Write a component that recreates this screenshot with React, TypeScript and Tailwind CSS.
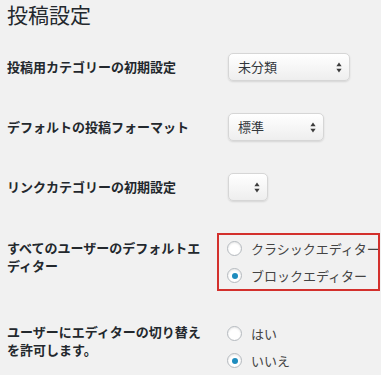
import React from 'react';

interface SelectProps {
  value: string;
  widthClass: string;
}

const SelectArrows: React.FC = () => (
  <svg width="6" height="11" viewBox="0 0 6 11" className="shrink-0">
    <path d="M3 0.6L5.6 4.3H0.4Z" fill="#3c3c3c" />
    <path d="M3 10.4L5.6 6.7H0.4Z" fill="#3c3c3c" />
  </svg>
);

const FakeSelect: React.FC<SelectProps> = ({ value, widthClass }) => (
  <div
    className={`${widthClass} h-7 ml-[11px] flex items-center justify-between pl-[9px] pr-[7px] rounded-[5px] border border-[#d6d6d6] bg-gradient-to-b from-white to-[#eeeeee] shadow-[0_1px_2px_rgba(0,0,0,0.12)] text-[13px] text-[#32373c]`}
  >
    <span>{value}</span>
    <SelectArrows />
  </div>
);

const Radio: React.FC<{ checked?: boolean }> = ({ checked }) => (
  <span className="w-[15px] h-[15px] shrink-0 rounded-full border border-[#b4b9be] bg-white shadow-[inset_0_1px_2px_rgba(0,0,0,0.1)] flex items-center justify-center">
    {checked && <span className="w-[6px] h-[6px] rounded-full bg-[#1e8cbe]" />}
  </span>
);

const RadioRow: React.FC<{ label: string; checked?: boolean }> = ({ label, checked }) => (
  <div className="h-[27px] flex items-center whitespace-nowrap">
    <Radio checked={checked} />
    <span className="ml-[9px] text-[13px] text-[#444]">{label}</span>
  </div>
);

const labelClass = "w-[210px] shrink-0 pr-2 text-[13px] leading-[18px] font-semibold text-[#23282d]";

const App: React.FC = () => {
  return (
    <div className="min-h-screen bg-[#f1f1f1] pl-[7px] font-['Noto_Sans_CJK_JP',sans-serif] text-[#23282d] overflow-hidden">
      <h1 className="text-[21px] leading-[28px] font-normal">投稿設定</h1>

      <div className="mt-[25px] flex flex-col">
        <div className="h-7 flex items-center">
          <div className={labelClass}>投稿用カテゴリーの初期設定</div>
          <FakeSelect value="未分類" widthClass="w-[122px]" />
        </div>

        <div className="h-7 mt-8 flex items-center">
          <div className={labelClass}>デフォルトの投稿フォーマット</div>
          <FakeSelect value="標準" widthClass="w-[96px]" />
        </div>

        <div className="h-7 mt-8 flex items-center">
          <div className={labelClass}>リンクカテゴリーの初期設定</div>
          <FakeSelect value="" widthClass="w-[40px]" />
        </div>

        <div className="mt-8 flex items-start">
          <div className={`${labelClass} pt-[6px]`}>すべてのユーザーのデフォルトエディター</div>
          <div className="w-[163px] h-[58px] border-2 border-[#d3302c] pl-2 overflow-hidden">
            <RadioRow label="クラシックエディター" />
            <RadioRow label="ブロックエディター" checked />
          </div>
        </div>

        <div className="mt-[29px] flex items-start">
          <div className={`${labelClass} pt-[3px]`}>ユーザーにエディターの切り替えを許可します。</div>
          <div className="ml-[10px]">
            <RadioRow label="はい" />
            <RadioRow label="いいえ" checked />
          </div>
        </div>
      </div>
    </div>
  );
};

export default App;
